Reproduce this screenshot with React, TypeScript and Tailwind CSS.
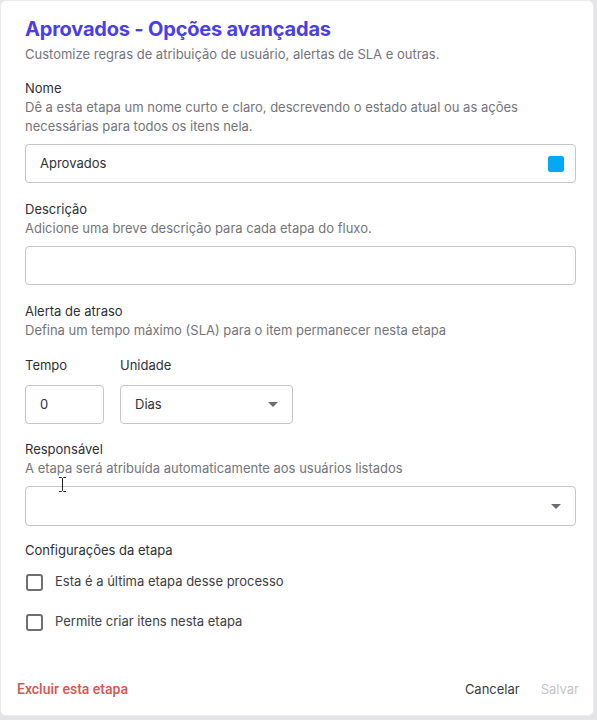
import { useState } from 'react';

function Caret() {
  return (
    <svg width="10" height="5" viewBox="0 0 10 5" className="shrink-0">
      <path d="M0 0h10L5 5z" fill="#6b6b70" />
    </svg>
  );
}

function Check({ label }: { label: string }) {
  const [on, setOn] = useState(false);
  return (
    <label className="flex items-center gap-[12px] h-[20px] cursor-pointer">
      <span
        onClick={() => setOn(!on)}
        className={`w-[17px] h-[17px] rounded-[3px] border-2 border-[#6e6e73] ml-[1px] ${on ? 'bg-[#4a3ee8]' : 'bg-white'}`}
      />
      <span className="text-[13px] text-[#3d3d45]">{label}</span>
    </label>
  );
}

export default function App() {
  return (
    <div className="w-[597px] h-[720px] bg-[#e4e4e6] font-['Inter',sans-serif]">
      <div className="w-[594px] h-[716px] bg-white rounded-[6px] border border-[#ececec] flex flex-col relative">
        <div className="pl-[24px] pr-[17px] pt-[14px] flex-1">
          <h1 className="text-[20px] font-bold text-[#4a3ee8] leading-[28px] tracking-[-0.2px]">
            Aprovados - Opções avançadas
          </h1>
          <p className="text-[13px] text-[#74747c] leading-[18px] mt-[2px]">
            Customize regras de atribuição de usuário, alertas de SLA e outras.
          </p>

          {/* Nome */}
          <div className="mt-[16px]">
            <div className="text-[13px] text-[#2f2f37] leading-[19px]">Nome</div>
            <p className="text-[13px] text-[#74747c] leading-[19px] pr-[40px]">
              Dê a esta etapa um nome curto e claro, descrevendo o estado atual ou as ações necessárias para todos os itens nela.
            </p>
            <div className="mt-[8px] h-[39px] border border-[#c6c6c8] rounded-[4px] flex items-center justify-between pl-[14px] pr-[11px]">
              <span className="text-[13px] text-[#2f2f37]">Aprovados</span>
              <span className="w-[16px] h-[16px] rounded-[2px] bg-[#03a9f4]" />
            </div>
          </div>

          {/* Descrição */}
          <div className="mt-[17px]">
            <div className="text-[13px] text-[#2f2f37] leading-[19px]">Descrição</div>
            <p className="text-[13px] text-[#74747c] leading-[19px]">
              Adicione uma breve descrição para cada etapa do fluxo.
            </p>
            <div className="mt-[8px] h-[39px] border border-[#c6c6c8] rounded-[4px]" />
          </div>

          {/* Alerta */}
          <div className="mt-[17px]">
            <div className="text-[13px] text-[#2f2f37] leading-[19px]">Alerta de atraso</div>
            <p className="text-[13px] text-[#74747c] leading-[19px]">
              Defina um tempo máximo (SLA) para o item permanecer nesta etapa
            </p>
            <div className="flex gap-[16px] mt-[16px]">
              <div>
                <div className="text-[13px] text-[#2f2f37] leading-[19px]">Tempo</div>
                <div className="mt-[10px] w-[79px] h-[39px] border border-[#c6c6c8] rounded-[4px] flex items-center pl-[14px] text-[13px] text-[#2f2f37]">
                  0
                </div>
              </div>
              <div>
                <div className="text-[13px] text-[#2f2f37] leading-[19px]">Unidade</div>
                <div className="mt-[10px] w-[173px] h-[39px] border border-[#c6c6c8] rounded-[4px] flex items-center justify-between pl-[14px] pr-[14px] text-[13px] text-[#2f2f37]">
                  <span>Dias</span>
                  <Caret />
                </div>
              </div>
            </div>
          </div>

          {/* Responsável */}
          <div className="mt-[16px]">
            <div className="text-[13px] text-[#2f2f37] leading-[19px]">Responsável</div>
            <p className="text-[13px] text-[#74747c] leading-[19px]">
              A etapa será atribuída automaticamente aos usuários listados
            </p>
            <div className="mt-[8px] h-[40px] border border-[#c6c6c8] rounded-[4px] flex items-center justify-end pr-[14px]">
              <Caret />
            </div>
          </div>

          {/* Configurações */}
          <div className="mt-[15px]">
            <div className="text-[13px] text-[#2f2f37] leading-[19px]">Configurações da etapa</div>
            <div className="mt-[12px] flex flex-col gap-[20px]">
              <Check label="Esta é a última etapa desse processo" />
              <Check label="Permite criar itens nesta etapa" />
            </div>
          </div>
        </div>

        {/* Footer */}
        <div className="flex items-center justify-between pl-[16px] pr-[14px] pb-[15px] font-['Roboto',sans-serif]">
          <button type="button" className="text-[14px] font-medium text-[#d9534f]">Excluir esta etapa</button>
          <div className="flex gap-[21px] text-[13px] font-['Inter',sans-serif]">
            <button type="button" className="text-[#3a3a42]">Cancelar</button>
            <button type="button" disabled className="text-[#c4c4c8]">Salvar</button>
          </div>
        </div>

        {/* text cursor */}
        <svg width="7" height="15" viewBox="0 0 7 15" className="absolute left-[58px] top-[476px]">
          <path d="M0 0.5h2.5l1 1 1-1H7M3.5 1.5v12M0 14.5h2.5l1-1 1 1H7" fill="none" stroke="#222" strokeWidth="1" />
        </svg>
      </div>
    </div>
  );
}
